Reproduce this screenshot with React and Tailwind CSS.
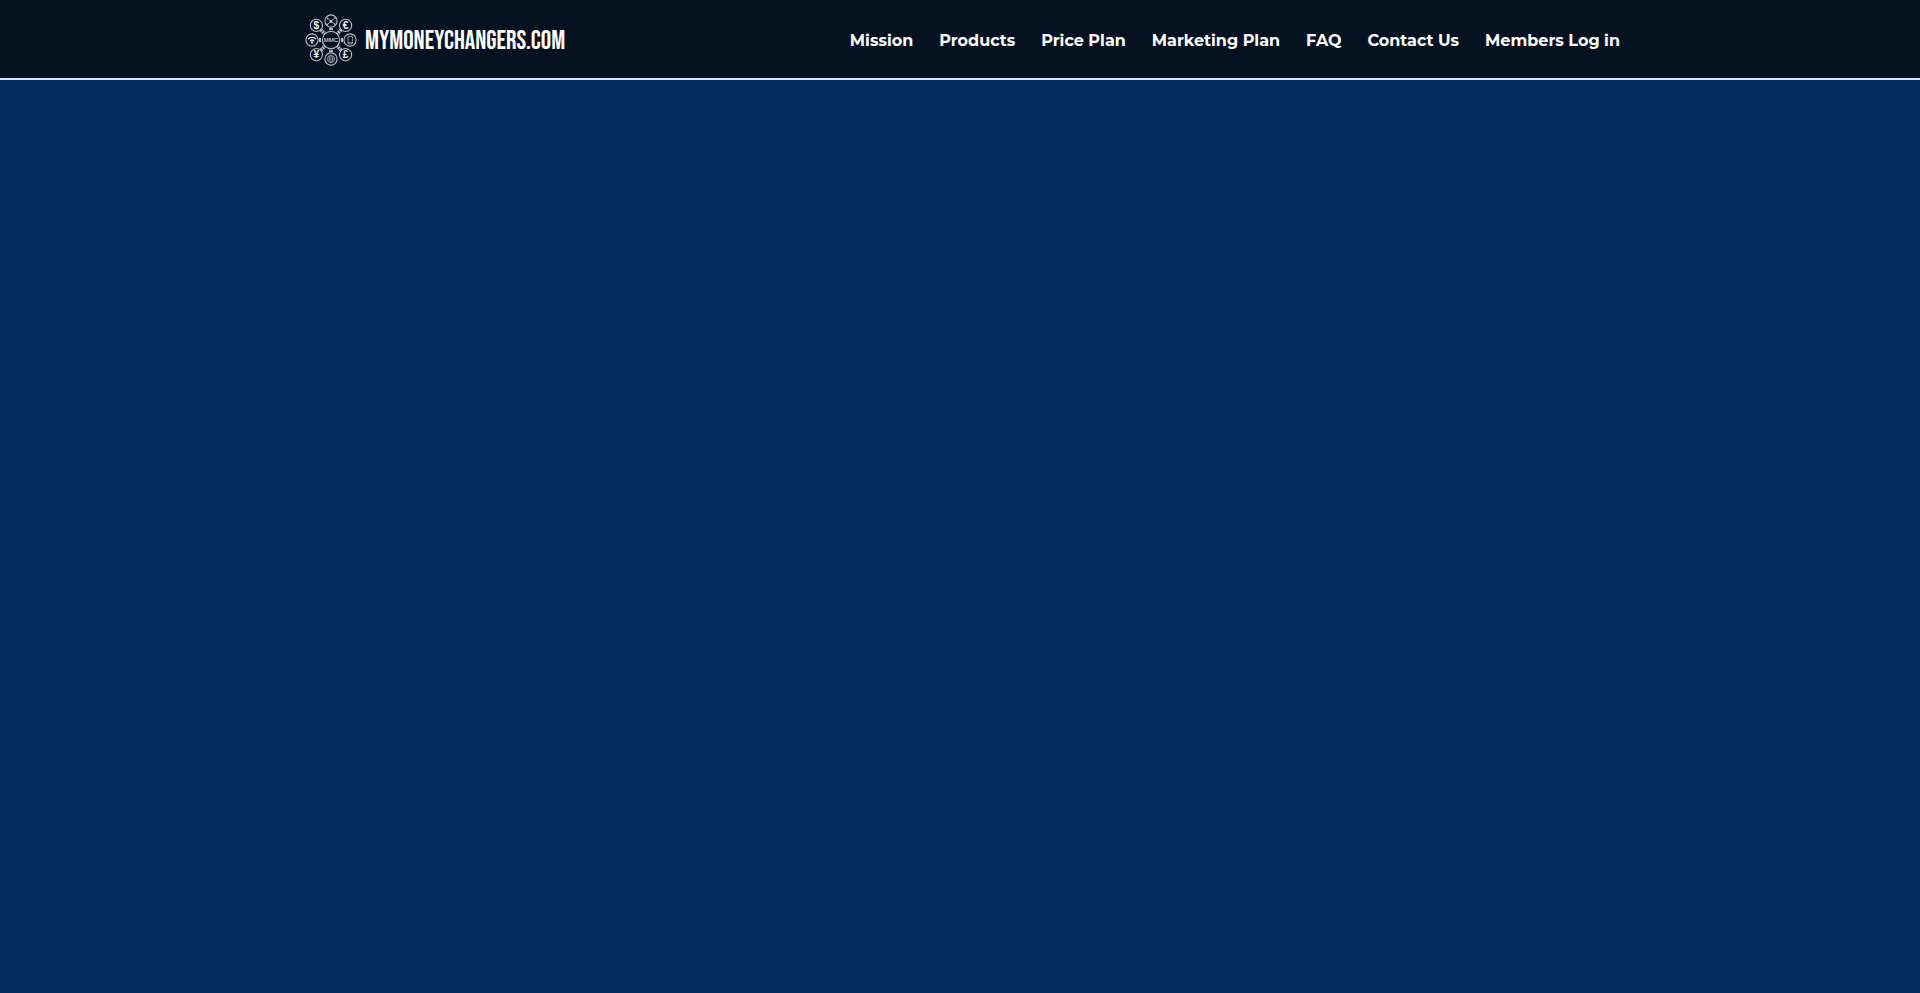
import React from 'react'

const links = [
    { name: "Mission", href: "#mission" },
    { name: "Products", href: "#products" },
    { name: "Price Plan", href: "#price-plan" },
    { name: "Marketing Plan", href: "#marketing-plan" },
    { name: "FAQ", href: "#faq" },
    { name: "Contact Us", href: "#contact" },
    { name: "Members Log in", href: "#login" },
]

const Logo = () => {
    return (
        <svg className="w-[52px] h-[52px] shrink-0" viewBox="0 0 52 52" fill="none" stroke="#b4c0cb" strokeWidth="1.1" aria-hidden="true">
            {/* center */}
            <circle cx="26" cy="26" r="8.6" />
            {/* outer circles */}
            <circle cx="26" cy="7" r="6.1" />
            <circle cx="40.6" cy="11.4" r="6.1" />
            <circle cx="45" cy="26" r="6.1" />
            <circle cx="40.6" cy="40.6" r="6.1" />
            <circle cx="26" cy="45" r="6.1" />
            <circle cx="11.4" cy="40.6" r="6.1" />
            <circle cx="7" cy="26" r="6.1" />
            <circle cx="11.4" cy="11.4" r="6.1" />
            {/* connectors */}
            <g strokeWidth="3.4" strokeDasharray="1.8 0.6">
                <path d="M15.8 15.8l4 4M36.2 15.8l-4 4M15.8 36.2l4-4M36.2 36.2l-4-4" />
            </g>
            <path strokeWidth="1.6" stroke="#dfe7ee" d="M24 15h4M24 37h4M15 24v4M37 24v4" />
            {/* network */}
            <path strokeWidth="0.8" d="M22.6 4.4L26 7.4l3.8-3.4M26 7.4l3.6 2.6M26 7.4l-3.4 2.8" />
            <g fill="#c9d3dc" stroke="none">
                <circle cx="26" cy="7.4" r="1.3" />
                <circle cx="22.6" cy="4.4" r="0.8" />
                <circle cx="29.8" cy="4" r="0.8" />
                <circle cx="29.6" cy="10" r="0.8" />
                <circle cx="22.6" cy="10.2" r="0.8" />
            </g>
            {/* phone */}
            <rect x="43" y="22.4" width="4.4" height="7.4" rx="0.6" strokeWidth="0.8" />
            <path strokeWidth="0.6" d="M43 28.6h4.4" />
            {/* globe */}
            <g strokeWidth="0.7" stroke="#9faab5">
                <circle cx="26" cy="45" r="3.7" />
                <ellipse cx="26" cy="45" rx="1.6" ry="3.7" />
                <path d="M22.3 45h7.4M22.9 43h6.2M22.9 47h6.2" />
            </g>
            {/* wifi */}
            <g strokeWidth="1.3" stroke="#eef3f7">
                <path d="M3 25c2.2-2.2 5.8-2.2 8 0M4.9 27c1.3-1.2 2.9-1.2 4.2 0" />
                <circle cx="7" cy="28.5" r="0.5" />
            </g>
            <g fill="#eef3f7" stroke="none" fontFamily="Liberation Sans, sans-serif" fontWeight="700" textAnchor="middle">
                <text x="26" y="28.3" fontSize="6" fontWeight="400">MMC</text>
                <text x="11.4" y="15" fontSize="10">$</text>
                <text x="40.6" y="15" fontSize="10">€</text>
                <text x="11.4" y="44.2" fontSize="10">¥</text>
                <text x="40.6" y="44.2" fontSize="10">£</text>
            </g>
        </svg>
    )
}

const App = () => {
    return (
        <div className="min-h-screen bg-[#042e5f]">
            <header className="bg-[#061221] border-b-2 border-[#cfe6fa]">
                <div className="max-w-[1320px] mx-auto pl-[5px] pt-[14px] pb-3 flex items-center justify-between">
                    {/* brand */}
                    <a href="#home" className="flex items-center gap-2 text-white text-[26px] leading-8 font-normal font-['Bebas_Neue','Roboto_Condensed','Liberation_Sans_Narrow','Roboto',sans-serif]">
                        <Logo />
                        <span className="pt-1">MYMONEYCHANGERS.COM</span>
                    </a>
                    {/* menu */}
                    <nav className="flex items-center gap-[26px] pt-0.5 text-base leading-6 text-white font-bold font-['Montserrat','Inter',sans-serif]">
                        {links.map((link) => (
                            <a key={link.name} href={link.href}>{link.name}</a>
                        ))}
                    </nav>
                </div>
            </header>
        </div>
    )
}

export default App
